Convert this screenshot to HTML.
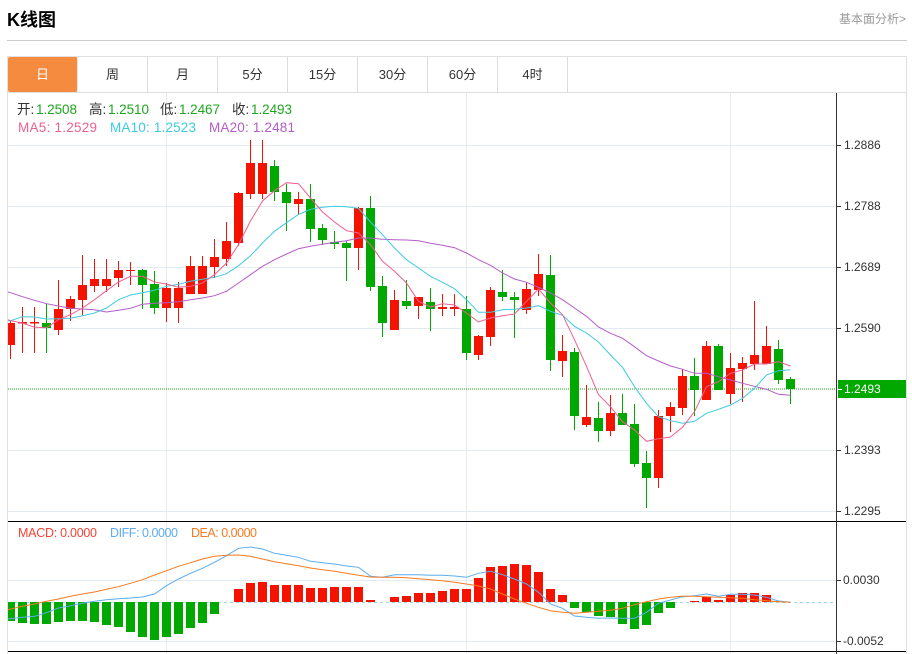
<!DOCTYPE html>
<html lang="zh">
<head>
<meta charset="utf-8">
<title>K线图</title>
<style>
html,body{margin:0;padding:0;background:#fff;width:912px;height:654px;overflow:hidden}
body{position:relative;font-family:"Liberation Sans","Noto Sans CJK SC",sans-serif}
.title{position:absolute;left:7px;top:8px;line-height:24px;font-size:18px;font-weight:bold;color:#000}
.more{position:absolute;left:839px;top:10px;line-height:18px;font-size:12px;color:#999;white-space:nowrap}
.hr{position:absolute;left:7px;top:40px;width:900px;height:1px;background:#ccc}
.tabs{position:absolute;left:7px;top:56px;width:898px;height:35px;border:1px solid #e0e0e0;border-bottom:1px solid #e0e0e0;display:flex}
.tab{width:69px;height:35px;line-height:35px;text-align:center;font-size:13px;color:#333;border-right:1px solid #ddd;flex:none}
.tab.on{background:#f58b3f;color:#fff;border-radius:2px;border-right:1px solid #e4e4e4}
svg{position:absolute;left:0;top:0}
text{font-family:"Liberation Sans","Noto Sans CJK SC",sans-serif}
</style>
</head>
<body>
<div class="title">K线图</div>
<div class="more">基本面分析&gt;</div>
<div class="hr"></div>
<div class="tabs">
<div class="tab on">日</div><div class="tab">周</div><div class="tab">月</div><div class="tab">5分</div><div class="tab">15分</div><div class="tab">30分</div><div class="tab">60分</div><div class="tab">4时</div>
</div>
<svg width="912" height="654" viewBox="0 0 912 654" xmlns="http://www.w3.org/2000/svg">
<defs><clipPath id="c"><rect x="8" y="93" width="828" height="561"/></clipPath></defs>
<path d="M7.5 92V654M906.5 92V654" stroke="#e0e0e0" fill="none"/>
<path d="M8 145.5H836M8 206.5H836M8 267.5H836M8 328.5H836M8 450.5H836M8 511.5H836M8 580.5H836M8 641.5H836M166.5 93V654M466.5 93V654M730.5 93V654" stroke="#e2ebf2" fill="none"/>
<path d="M8 389H836" stroke="#18a818" stroke-dasharray="1 1" fill="none"/>
<path d="M8 602.5H833" stroke="#96daf0" stroke-dasharray="3 3" fill="none"/>
<g clip-path="url(#c)">
<path fill="none" stroke="#f41300" d="M10.5 321V359M22.5 307V353M34.5 307V353M58.5 280V335M70.5 296V321M82.5 255V315M94.5 259V292M106.5 259V292M118.5 261V287M130.5 262V285M166.5 283V322M178.5 282V323M190.5 256V294M202.5 256V294M214.5 239V278M226.5 222V266M238.5 192V246M250.5 140V199M262.5 140V199M298.5 192V215M358.5 207V270M394.5 290V330M418.5 297V319M442.5 294V316M454.5 294V316M478.5 335V360M490.5 287V346M526.5 283V314M538.5 254V296M562.5 335V377M586.5 385V427M610.5 395V436M658.5 410V488M670.5 402V432M682.5 369V415M706.5 341V400M730.5 353V404M742.5 357V402M754.5 301V370M766.5 326V364"/>
<path fill="#f41300" d="M6 323h9v22h-9zM18 322h9v1.5h-9zM30 322h9v1.5h-9zM54 309h9v21h-9zM66 299h9v10h-9zM78 285h9v15h-9zM90 279h9v7h-9zM102 279h9v7h-9zM114 270h9v8h-9zM126 270h9v1h-9zM162 288h9v20h-9zM174 288h9v20h-9zM186 266h9v28h-9zM198 266h9v28h-9zM210 257h9v10h-9zM222 241h9v18h-9zM234 193h9v50h-9zM246 163h9v31h-9zM258 163h9v31h-9zM294 199h9v5h-9zM354 208h9v40h-9zM390 300h9v30h-9zM414 297h9v9h-9zM438 307h9v2h-9zM450 307h9v2h-9zM474 336h9v19h-9zM486 290h9v47h-9zM522 289h9v21h-9zM534 274h9v16h-9zM558 351h9v10h-9zM582 417h9v8h-9zM606 413h9v18h-9zM654 416h9v62h-9zM666 407h9v9h-9zM678 376h9v32h-9zM702 346h9v54h-9zM726 368h9v26h-9zM738 363h9v6h-9zM750 355h9v9h-9zM762 346h9v18h-9z"/>
<path fill="none" stroke="#00a800" d="M46.5 304V353M142.5 269V309M154.5 271V314M274.5 160V201M286.5 184V231M310.5 184V242M322.5 224V245M334.5 231V249M346.5 241V281M370.5 196V291M382.5 276V337M406.5 280V309M430.5 288V331M466.5 296V360M502.5 270V301M514.5 292V338M550.5 255V371M574.5 348V430M598.5 402V442M622.5 394V425M634.5 404V467M646.5 451V508M694.5 358V416M718.5 344V390M778.5 340V384M790.5 377V404"/>
<path fill="#00a800" d="M42 323h9v5h-9zM138 270h9v15h-9zM150 284h9v24h-9zM270 166h9v26h-9zM282 192h9v11h-9zM306 199h9v30h-9zM318 228h9v12h-9zM330 242h9v2h-9zM342 243h9v5h-9zM366 208h9v79h-9zM378 286h9v37h-9zM402 301h9v5h-9zM426 302h9v7h-9zM462 309h9v44h-9zM498 292h9v5h-9zM510 297h9v3h-9zM546 275h9v85h-9zM570 352h9v64h-9zM594 418h9v13h-9zM618 413h9v12h-9zM630 424h9v40h-9zM642 463h9v15h-9zM690 376h9v14h-9zM714 346h9v44h-9zM774 349h9v31h-9zM786 379h9v10h-9z"/>
<polyline fill="none" stroke="#b45cc8" points="8,292 10.5,292.7 22.5,296.7 34.5,300.3 46.5,303.7 58.5,306 70.5,308.3 82.5,309 94.5,309.7 106.5,312 118.5,310.3 130.5,308.3 142.5,304.3 154.5,303.3 166.5,302.7 178.5,301.7 190.5,299.7 202.5,298 214.5,295.7 226.5,291.3 238.5,283 250.5,274.7 262.5,266.3 274.5,259.7 286.5,254 298.5,248.7 310.5,246.3 322.5,244.3 334.5,242.3 346.5,240.7 358.5,238 370.5,238 382.5,239.3 394.5,239.7 406.5,240 418.5,240.7 430.5,243.3 442.5,245.3 454.5,247.7 466.5,253 478.5,259.7 490.5,265.3 502.5,273 514.5,279 526.5,282.3 538.5,287.3 550.5,293 562.5,299.7 574.5,308 586.5,316.3 598.5,327 610.5,333.3 622.5,338.3 634.5,346.7 646.5,355.7 658.5,361 670.5,366 682.5,369.3 694.5,373.3 706.5,373.3 718.5,376.7 730.5,380 742.5,383.3 754.5,386.3 766.5,389.3 778.5,394.3 790.5,395.3"/>
<polyline fill="none" stroke="#3ccbe0" points="8,321 10.5,320.7 22.5,316.7 34.5,317 46.5,319 58.5,318.7 70.5,318.3 82.5,315.7 94.5,313 106.5,308 118.5,299.7 130.5,295 142.5,292.7 154.5,290.3 166.5,286.3 178.5,284.3 190.5,281.3 202.5,279.3 214.5,277.3 226.5,273.7 238.5,265.7 250.5,255.7 262.5,243 274.5,231.3 286.5,222.7 298.5,214.5 310.5,209.3 322.5,207.3 334.5,206.3 346.5,206.7 358.5,208.3 370.5,222 382.5,234.7 394.5,248 406.5,259.7 418.5,268 430.5,276.3 442.5,282.3 454.5,288.7 466.5,299.7 478.5,312.3 490.5,312.3 502.5,309.7 514.5,309.3 526.5,308 538.5,305.7 550.5,311.3 562.5,315.3 574.5,326.3 586.5,333 598.5,342 610.5,355 622.5,367.3 634.5,386.7 646.5,403.3 658.5,416.7 670.5,420.7 682.5,423.3 694.5,421.3 706.5,413.3 718.5,409.3 730.5,405 742.5,398.3 754.5,388.3 766.5,375 778.5,370.7 790.5,369.7"/>
<polyline fill="none" stroke="#ee5f92" points="8,319.7 10.5,320.7 22.5,323 34.5,327.3 46.5,327.7 58.5,319.7 70.5,314.7 82.5,308 94.5,299.7 106.5,290.7 118.5,282 130.5,276.3 142.5,276.3 154.5,282 166.5,284 178.5,287.3 190.5,286.3 202.5,283 214.5,274.7 226.5,263 238.5,244.7 250.5,221 262.5,201 274.5,190.7 286.5,182.7 298.5,183.7 310.5,198 322.5,212 334.5,222 346.5,230.7 358.5,233 370.5,244.7 382.5,261.3 394.5,271.3 406.5,283 418.5,301.3 430.5,307 442.5,303.7 454.5,305 466.5,313 478.5,322 490.5,318 502.5,315.7 514.5,314 526.5,301.3 538.5,289 550.5,303 562.5,314.7 574.5,339.7 586.5,366.3 598.5,394.7 610.5,406.7 622.5,421.7 634.5,430 646.5,441.3 658.5,438.7 670.5,437 682.5,427.3 694.5,411.7 706.5,386.7 718.5,381.7 730.5,373.3 742.5,370 754.5,364 766.5,364 778.5,361.7 790.5,366"/>
<path fill="#00a800" d="M6 602h9v19h-9zM18 602h9v21h-9zM30 602h9v22h-9zM42 602h9v22h-9zM54 602h9v20h-9zM66 602h9v19h-9zM78 602h9v19h-9zM90 602h9v20h-9zM102 602h9v23h-9zM114 602h9v25h-9zM126 602h9v30h-9zM138 602h9v35h-9zM150 602h9v38h-9zM162 602h9v35h-9zM174 602h9v32h-9zM186 602h9v26h-9zM198 602h9v21h-9zM210 602h9v12h-9zM570 602h9v6h-9zM582 602h9v10h-9zM594 602h9v14h-9zM606 602h9v15h-9zM618 602h9v22h-9zM630 602h9v27h-9zM642 602h9v23h-9zM654 602h9v11h-9zM666 602h9v6h-9z"/>
<path fill="#f41300" d="M234 589h9v13h-9zM246 583h9v19h-9zM258 582h9v20h-9zM270 585h9v17h-9zM282 585h9v17h-9zM294 585h9v17h-9zM306 588h9v14h-9zM318 588h9v14h-9zM330 587h9v15h-9zM342 587h9v15h-9zM354 587h9v15h-9zM366 600h9v2h-9zM390 597h9v5h-9zM402 596h9v6h-9zM414 593h9v9h-9zM426 593h9v9h-9zM438 591h9v11h-9zM450 589h9v13h-9zM462 589h9v13h-9zM474 578h9v24h-9zM486 567h9v35h-9zM498 566h9v36h-9zM510 564h9v38h-9zM522 565h9v37h-9zM534 572h9v30h-9zM546 589h9v13h-9zM558 595h9v7h-9zM690 601h9v1h-9zM702 597h9v5h-9zM714 600h9v2h-9zM726 595h9v7h-9zM738 593h9v9h-9zM750 593h9v9h-9zM762 595h9v7h-9zM774 601h9v1h-9z"/>
<polyline fill="none" stroke="#5cadf0" points="8,619 22.5,617.3 34.5,616.3 46.5,612.7 58.5,608 70.5,605.7 82.5,603.3 94.5,601.3 106.5,599.7 118.5,598.7 130.5,598 142.5,597 154.5,594 166.5,585.7 178.5,579 190.5,573.3 202.5,568.3 214.5,562.3 226.5,555.7 238.5,548.3 250.5,547 262.5,549 274.5,553.3 286.5,555.3 298.5,557.3 310.5,561.3 322.5,562.7 334.5,564 346.5,566 358.5,567.3 370.5,576.3 382.5,577.3 394.5,574.7 406.5,574.7 418.5,574.7 430.5,575.3 442.5,575.3 454.5,576 466.5,577.3 478.5,573.3 490.5,571.3 502.5,574.7 514.5,579 526.5,584 538.5,592.3 550.5,604 562.5,608.3 574.5,616 586.5,617.3 598.5,618.3 610.5,618 622.5,618.3 634.5,618.3 646.5,612.3 658.5,603.3 670.5,600 682.5,596.7 694.5,595.7 706.5,594 718.5,596.3 730.5,594.3 742.5,594.3 754.5,595 766.5,597.3 778.5,601 790.5,602.3"/>
<polyline fill="none" stroke="#f57a20" points="8,609.7 22.5,606.3 34.5,604 46.5,601.3 58.5,599 70.5,596.3 82.5,594 94.5,592 106.5,589.3 118.5,586.7 130.5,583.3 142.5,579.7 154.5,575 166.5,570.7 178.5,566.3 190.5,562.7 202.5,559 214.5,556.3 226.5,555.3 238.5,555 250.5,556.3 262.5,559 274.5,561.7 286.5,563.7 298.5,565.7 310.5,568 322.5,569.7 334.5,571.3 346.5,573.3 358.5,575.3 370.5,577 382.5,577.3 394.5,577.3 406.5,577.7 418.5,578.7 430.5,579.7 442.5,580.7 454.5,582.3 466.5,584 478.5,586 490.5,589 502.5,594 514.5,599 526.5,603.3 538.5,607.3 550.5,610.7 562.5,612.3 574.5,613.3 586.5,612.3 598.5,611.3 610.5,610.3 622.5,608.3 634.5,604.7 646.5,601.7 658.5,599 670.5,597.3 682.5,596.3 694.5,596.3 706.5,596.7 718.5,597.3 730.5,597.7 742.5,598.3 754.5,599.7 766.5,600.7 778.5,601.7 790.5,602.3"/>
</g>
<path d="M8 521.5H906M8 651.5H906" stroke="#000" fill="none"/>
<path d="M836.5 93V654" stroke="#333" fill="none"/>
<path d="M836 145.5H841M836 206.5H841M836 267.5H841M836 328.5H841M836 450.5H841M836 511.5H841M836 580.5H841M836 641.5H841" stroke="#333" fill="none"/>
<rect x="838" y="380" width="68" height="18" fill="#00a800"/>
<path d="M838 389.5H842" stroke="#fff" fill="none"/>
<g font-size="12" fill="#333">
<text x="844" y="149">1.2886</text>
<text x="844" y="210">1.2788</text>
<text x="844" y="271">1.2689</text>
<text x="844" y="332">1.2590</text>
<text x="844" y="393" fill="#fff">1.2493</text>
<text x="844" y="454">1.2393</text>
<text x="844" y="515">1.2295</text>
<text x="843" y="584">0.0030</text>
<text x="843" y="645">-0.0052</text>
</g>
<g font-size="13.5">
<text x="17" y="114" fill="#333">开:</text><text x="36" y="114" fill="#1fa51f" textLength="41">1.2508</text>
<text x="89" y="114" fill="#333">高:</text><text x="108" y="114" fill="#1fa51f" textLength="41">1.2510</text>
<text x="160" y="114" fill="#333">低:</text><text x="179" y="114" fill="#1fa51f" textLength="41">1.2467</text>
<text x="232" y="114" fill="#333">收:</text><text x="251" y="114" fill="#1fa51f" textLength="41">1.2493</text>
<text x="18" y="132" fill="#ee5f92" textLength="79">MA5: 1.2529</text>
<text x="110" y="132" fill="#3ccbe0" textLength="86">MA10: 1.2523</text>
<text x="209" y="132" fill="#b45cc8" textLength="86">MA20: 1.2481</text>
</g>
<g font-size="12.5">
<text x="18" y="537" fill="#f44336" textLength="79">MACD: 0.0000</text>
<text x="110" y="537" fill="#5cadf0" textLength="68">DIFF: 0.0000</text>
<text x="191" y="537" fill="#f57a20" textLength="66">DEA: 0.0000</text>
</g>
</svg>
</body>
</html>
